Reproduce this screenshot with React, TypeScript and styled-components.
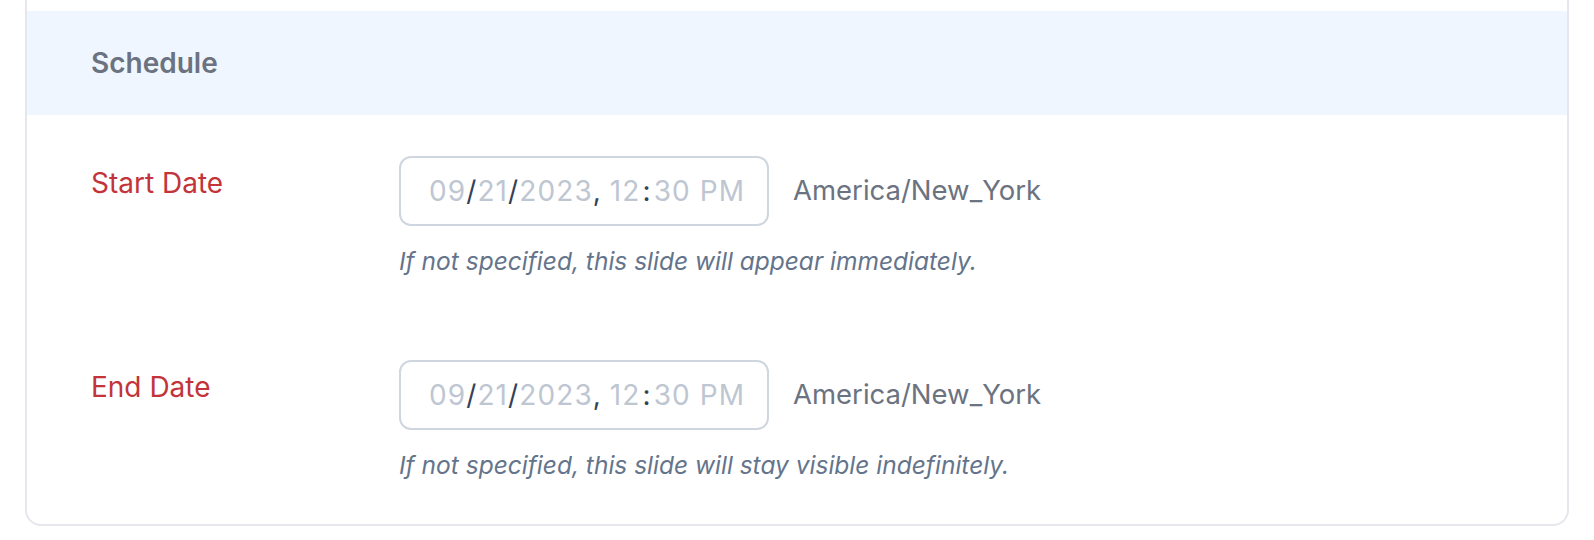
import React from "react";
import styled, { createGlobalStyle } from "styled-components";

const GlobalStyle = createGlobalStyle`
  html, body {
    margin: 0;
    padding: 0;
    background: #ffffff;
    font-family: Inter, "Noto Sans", "Liberation Sans", sans-serif;
  }
  * { box-sizing: border-box; }
`;

const Page = styled.div`
  padding: 0 25px 15px 25px;
`;

const Card = styled.section`
  border: 2px solid #e6e7ec;
  border-top: none;
  border-radius: 0 0 16px 16px;
  padding-top: 11px;
  background: #ffffff;
`;

const Header = styled.div`
  height: 104px;
  display: flex;
  align-items: center;
  padding-left: 64px;
  background: #eff6ff;
`;

const Title = styled.h2`
  margin: 0;
  font-size: 28px;
  line-height: 40px;
  font-weight: 600;
  color: #6b7280;
`;

const Body = styled.div`
  display: flex;
  flex-direction: column;
  gap: 83px;
  padding: 41px 64px 43px 64px;
`;

const Row = styled.div`
  display: grid;
  grid-template-columns: 308px 1fr;
`;

const Label = styled.label`
  padding-top: 7px;
  font-size: 28px;
  line-height: 40px;
  color: #c2343a;
`;

const Field = styled.div`
  display: flex;
  flex-direction: column;
  gap: 19px;
`;

const InputLine = styled.div`
  display: flex;
  align-items: center;
  gap: 24px;
`;

const DateBox = styled.div`
  width: 370px;
  height: 70px;
  border: 2px solid #cfd6e0;
  border-radius: 12px;
  display: flex;
  align-items: center;
  padding-left: 28px;
  overflow: hidden;
  white-space: nowrap;
  font-size: 28px;
  line-height: 40px;
  letter-spacing: 1.1px;
  color: #bec6d2;
`;

const Sep = styled.span<{ $space?: boolean; $pad?: boolean }>`
  color: #334155;
  margin-right: ${(p) => (p.$space ? "0.28em" : "0")};
  padding: ${(p) => (p.$pad ? "0 2px" : "0")};
`;

const Zone = styled.span`
  font-size: 27.5px;
  line-height: 36px;
  color: #6b7280;
  margin-bottom: 2px;
`;

const Help = styled.p`
  margin: 0;
  font-size: 24.5px;
  line-height: 32px;
  font-style: italic;
  color: #64748b;
`;

const DateValue = () => (
  <DateBox>
    <span>09</span>
    <Sep>/</Sep>
    <span>21</span>
    <Sep>/</Sep>
    <span>2023</span>
    <Sep $space>,</Sep>
    <span>12</span>
    <Sep $pad>:</Sep>
    <span>30 PM</span>
  </DateBox>
);

const rows = [
  { label: "Start Date", help: "If not specified, this slide will appear immediately." },
  { label: "End Date", help: "If not specified, this slide will stay visible indefinitely." },
];

export default function App() {
  return (
    <>
      <GlobalStyle />
      <Page>
        <Card>
          <Header>
            <Title>Schedule</Title>
          </Header>
          <Body>
            {rows.map((r) => (
              <Row key={r.label}>
                <Label>{r.label}</Label>
                <Field>
                  <InputLine>
                    <DateValue />
                    <Zone>America/New_York</Zone>
                  </InputLine>
                  <Help>{r.help}</Help>
                </Field>
              </Row>
            ))}
          </Body>
        </Card>
      </Page>
    </>
  );
}
